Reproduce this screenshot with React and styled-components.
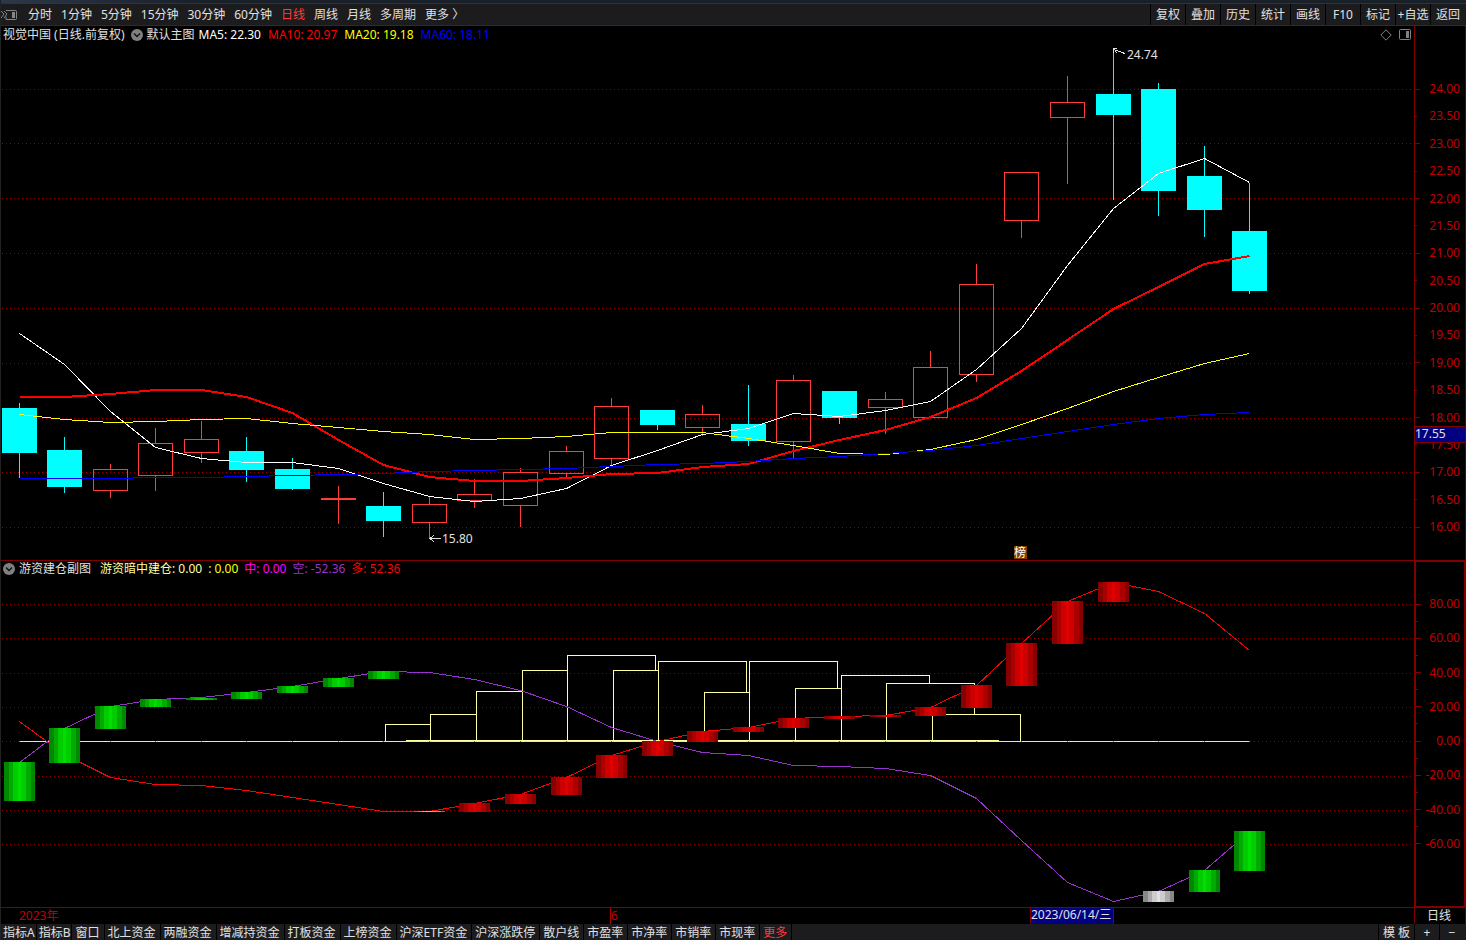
import React from "react";
import styled, { createGlobalStyle } from "styled-components";

const GlobalStyle = createGlobalStyle`
  * { box-sizing: border-box; }
  body {
    margin: 0;
    background: #000;
    color: #e0e0e0;
    font: 12px/16px "Noto Sans", "Noto Sans CJK SC", sans-serif;
  }
  button { font: inherit; color: inherit; margin: 0; padding: 0; border: 0; background: none; white-space: nowrap; cursor: pointer; }
  svg { display: block; }
`;

const Page = styled.main`
  display: flex;
  flex-direction: column;
  min-height: 100vh;
  background: #000;
  border-left: 1px solid #222;
`;
const TopStrip = styled.div`
  height: 4px;
  background: linear-gradient(90deg, #2c3848 0, #18202a 200px, #18202a 100%);
  border-bottom: 1px solid #333;
`;
const Toolbar = styled.nav`
  display: flex;
  justify-content: space-between;
  height: 22px;
  padding-right: 1px;
  background: #1c1c1e;
  border-bottom: 1px solid #2c2c2c;
`;
const Periods = styled.div`
  display: flex;
  align-items: center;
  gap: 9px;
`;
const Period = styled.button`
  color: ${(p) => (p.$active ? "#ff3c3c" : "#e0e0e0")};
`;
const PanelToggle = styled.button`
  width: 18px;
  height: 16px;
`;
const Tools = styled.div`
  display: flex;
`;
const Tool = styled.button`
  width: 35px;
  border-left: 1px solid #000;
  overflow: hidden;
`;
const Panel = styled.section`
  display: flex;
  border-bottom: 1px solid #800000;
`;
const Plot = styled.div`
  flex: 1;
  min-width: 0;
  height: ${(p) => p.$height}px;
  overflow: hidden;
  position: relative;
`;
const Legend = styled.header`
  position: absolute;
  top: 0;
  left: 0;
  right: 0;
  display: flex;
  align-items: center;
  gap: 4px;
  height: ${(p) => p.$height}px;
  padding: 0 3px 0 2px;
  white-space: nowrap;
`;
const LegendItem = styled.span`
  color: ${(p) => p.$color};
`;
const LegendTitle = styled.span`
  margin-right: ${(p) => p.$gap || 0}px;
`;
const LegendValues = styled.div`
  display: flex;
  gap: ${(p) => p.$gap}px;
`;
const LegendTools = styled.div`
  display: flex;
  gap: 7px;
  margin-left: auto;
`;
const Canvas = styled.svg`
  width: 100%;
  height: 100%;
`;
const Axis = styled.div`
  position: relative;
  width: 52px;
  display: flex;
  flex-direction: column;
  justify-content: space-between;
  padding: ${(p) => p.$pad};
  color: #c00000;
  border-left: ${(p) => (p.$boxed ? 2 : 1)}px solid #800000;
  border-right: ${(p) => (p.$boxed ? "2px solid #800000" : "1px solid #222")};
  border-top: ${(p) => (p.$boxed ? 1 : 0)}px solid #800000;
  border-bottom: ${(p) => (p.$boxed ? 1 : 0)}px solid #800000;
`;
const AxisLabel = styled.div`
  display: flex;
  align-items: center;
  justify-content: space-between;
  height: 16px;
  padding-right: ${(p) => p.$right}px;
  &::before {
    content: "";
    width: ${(p) => (p.$minor ? 2 : 5)}px;
    height: 1px;
    background: #800000;
  }
`;
const MinorTick = styled.div`
  width: 2px;
  height: 1px;
  background: #800000;
`;
const PriceMarker = styled.div`
  position: absolute;
  top: 400px;
  left: 0;
  right: 0;
  height: 17px;
  line-height: 14px;
  background: #000080;
  border: solid #800000;
  border-width: 1px 0;
  color: #e0e0e0;
`;
const DateRow = styled.div`
  display: flex;
  height: 16px;
  color: #c00000;
`;
const DateTrack = styled.div`
  flex: 1;
  position: relative;
`;
const DateMark = styled.span`
  position: absolute;
  left: ${(p) => p.$x}px;
  top: 0;
  height: 16px;
  border-left: ${(p) => (p.$tick ? 1 : 0)}px solid #b00000;
`;
const DateCursor = styled(DateMark)`
  padding-right: 2px;
  background: #000080;
  color: #e0e0e0;
  border: solid #800000;
  border-width: 0 1px;
  line-height: 14px;
`;
const DatePeriod = styled.div`
  width: 52px;
  padding-right: 2px;
  text-align: center;
  color: #e0e0e0;
  border-left: 1px solid #800000;
  border-right: 1px solid #222;
`;
const BottomBar = styled.nav`
  display: flex;
  height: 16px;
  padding-right: 2px;
  line-height: 14px;
  background: #1c1c1e;
`;
const BottomTab = styled.button`
  padding: ${(p) => (p.$tight ? "2px 1px 0 2px" : "2px 4px 0 3px")};
  border-right: 1px solid #000;
  color: ${(p) => (p.$active ? "#ff3c3c" : "#e0e0e0")};
`;
const BottomTools = styled.div`
  display: flex;
  margin-left: auto;
`;
const BottomTool = styled.button`
  width: ${(p) => p.$width}px;
  padding-top: 2px;
  border-left: 1px solid #000;
`;

const periods = ["分时", "1分钟", "5分钟", "15分钟", "30分钟", "60分钟", "日线", "周线", "月线", "多周期", "更多 〉"];
const tools = ["复权", "叠加", "历史", "统计", "画线", "F10", "标记", "+自选", "返回"];
const tabs = ["指标A", "指标B", "窗口", "北上资金", "两融资金", "增减持资金", "打板资金", "上榜资金", "沪深ETF资金", "沪深涨跌停", "散户线", "市盈率", "市净率", "市销率", "市现率", "更多"];
const prices = Array.from({ length: 17 }, (_, i) => (24 - i / 2).toFixed(2));
const levels = ["80.00", "60.00", "40.00", "20.00", "0.00", "-20.00", "-40.00", "-60.00"];

const slot = (i) => 18 + Math.floor(i * 45.585);

/* direction, high, body top, body bottom, low */
const candles = [
  ["d", 403, 408, 453, 478], ["d", 437, 450, 487, 493], ["u", 464, 469, 491, 498], ["u", 428, 443, 476, 491],
  ["u", 421, 439, 453, 463], ["d", 437, 451, 470, 482], ["d", 458, 469, 489, 490], ["u", 486, 498, 500, 524],
  ["d", 492, 506, 521, 537], ["u", 496, 504, 523, 538], ["u", 479, 494, 501, 508], ["u", 468, 472, 506, 527],
  ["u", 446, 451, 474, 478], ["u", 398, 406, 459, 466], ["d", 410, 410, 425, 430], ["u", 405, 414, 428, 436],
  ["d", 385, 424, 441, 446], ["u", 375, 380, 442, 458], ["d", 391, 391, 418, 424], ["u", 392, 399, 408, 434],
  ["u", 351, 367, 418, 418], ["u", 264, 284, 375, 382], ["u", 172, 172, 221, 238], ["u", 76, 102, 118, 184],
  ["d", 48, 94, 115, 200], ["d", 83, 89, 191, 216], ["d", 146, 176, 210, 237], ["d", 183, 231, 291, 294],
];
const ma60 = [478, 478, 478, 477, 477, 476, 475, 474, 473, 471, 470, 469, 468, 466, 464, 463, 461, 458, 456, 453, 450, 445, 438, 431, 424, 418, 414, 412];
const ma20 = [414, 419, 422, 421, 419, 418, 423, 427, 431, 434, 439, 438, 436, 432, 432, 432, 438, 445, 453, 454, 449, 439, 424, 408, 391, 377, 363, 353];
const ma10 = [397, 397, 394, 390, 390, 397, 413, 440, 465, 477, 481, 481, 478, 474, 473, 467, 464, 451, 440, 430, 417, 398, 371, 340, 309, 287, 264, 256];
const ma5 = [333, 364, 411, 447, 458, 462, 462, 468, 483, 496, 501, 498, 488, 465, 450, 434, 428, 413, 416, 410, 401, 369, 328, 265, 208, 173, 158, 182];

const bearLine = [762, 728, 706, 699, 697, 692, 686, 678, 671, 672, 679, 690, 706, 727, 741, 752, 755, 765, 766, 768, 775, 798, 840, 882, 901, 891, 870, 831];
const bullLine = [721, 754, 777, 784, 785, 790, 797, 804, 811, 811, 803, 794, 777, 755, 741, 731, 727, 718, 716, 715, 707, 685, 643, 601, 582, 591, 613, 650];

/* slot, top, bottom, palette */
const bars = [
  [0, 762, 801, "g"], [1, 728, 763, "g"], [2, 706, 729, "g"], [3, 699, 707, "g"], [4, 698, 700, "g"], [5, 692, 699, "g"],
  [6, 686, 693, "g"], [7, 678, 687, "g"], [8, 671, 679, "g"], [9, 811, 812, "y"], [10, 803, 812, "r"], [11, 794, 804, "r"],
  [12, 777, 795, "r"], [13, 755, 778, "r"], [14, 741, 756, "r"], [15, 731, 742, "r"], [16, 727, 732, "r"], [17, 718, 728, "r"],
  [18, 716, 719, "r"], [19, 715, 717, "r"], [20, 707, 716, "r"], [21, 685, 708, "r"], [22, 643, 686, "r"], [23, 601, 644, "r"],
  [24, 582, 602, "r"], [25, 891, 902, "w"], [26, 870, 892, "g"], [27, 831, 871, "g"],
];
const shade = {
  g: (v) => `rgb(0,${v},0)`,
  r: (v) => `rgb(${v},0,0)`,
  w: (v) => `rgb(${v},${v},${v})`,
  y: (v) => `rgb(${v},${v},0)`,
};
/* inset from the bar's left edge, width, brightness */
const stripes = [[0, 31, 136], [5, 22, 170], [9, 13, 204], [14, 3, 224]];

/* left, top, right, where the right edge ends */
const steps = [
  [385, 724, 430, 724], [430, 714, 476, 714], [476, 691, 522, 691], [522, 670, 567, 670], [567, 655, 655, 670],
  [613, 670, 658, 670], [658, 661, 746, 692], [704, 692, 749, 692], [749, 661, 837, 688], [795, 688, 841, 688],
  [841, 675, 929, 683], [886, 683, 974, 714], [932, 714, 1020, 741],
];

const trace = (values, shift = 0.5) => values.map((v, i) => `${slot(i) + 0.5},${v + shift}`).join(" ");

const Grid = ({ rows }) => (
  <g stroke="#900000" strokeDasharray="1 3">
    {rows.map((y) => <line key={y} x1="1" x2="100%" y1={y + 0.5} y2={y + 0.5} />)}
  </g>
);

const Candle = ({ x, data: [dir, high, top, bottom, low] }) => {
  if (dir === "d")
    return (
      <g fill="#00ffff">
        <rect x={x} y={high} width="1" height={low - high} />
        <rect x={x - 17} y={top} width="35" height={bottom - top} />
      </g>
    );
  return (
    <g fill="#ff3c3c">
      <rect x={x} y={high} width="1" height={top - high} />
      <rect x={x} y={bottom} width="1" height={low - bottom} />
      {bottom - top > 2 ? (
        <rect x={x - 16.5} y={top + 0.5} width="34" height={bottom - top - 1} fill="none" stroke="#ff3c3c" />
      ) : (
        <rect x={x - 17} y={top} width="35" height={bottom - top} />
      )}
    </g>
  );
};

const Chevron = () => (
  <svg width="12" height="12" viewBox="0 0 12 12" aria-hidden="true">
    <circle cx="6" cy="6" r="6" fill="#808080" />
    <path d="M3 4.5 6 7.5 9 4.5" fill="none" stroke="#111" strokeWidth="1.4" />
  </svg>
);
const Diamond = () => (
  <svg width="12" height="12" viewBox="0 0 12 12" aria-hidden="true">
    <path d="M6 .8 11.2 6 6 11.2.8 6Z" fill="none" stroke="#808080" />
  </svg>
);
const SidePanel = () => (
  <svg width="12" height="12" viewBox="0 0 12 12" aria-hidden="true">
    <rect x=".5" y=".5" width="11" height="10" rx="1" fill="none" stroke="#808080" />
    <rect x="7" y="2" width="3" height="7" fill="#808080" />
  </svg>
);

export default function App() {
  return (
    <Page>
      <GlobalStyle />
      <TopStrip />
      <Toolbar aria-label="周期">
        <Periods>
          <PanelToggle aria-label="侧栏">
            <svg width="17" height="16" viewBox="0 0 17 16" fill="none" stroke="#858585">
              <path d="M0 4l3 3-3 4M3 4l3 3-3 4" />
              <path d="M5 3.500h9.500q1 0 1 1v7q0 1-1 1h-9.500v-3" />
              <rect x="11" y="5" width="3" height="6" fill="#858585" stroke="none" />
            </svg>
          </PanelToggle>
          {periods.map((p) => <Period key={p} $active={p === "日线"}>{p}</Period>)}
        </Periods>
        <Tools>{tools.map((t) => <Tool key={t}>{t}</Tool>)}</Tools>
      </Toolbar>

      <Panel>
        <Plot $height={534}>
          <Canvas shapeRendering="crispEdges">
            <g transform="translate(0,-26)">
              <Grid rows={[89, 143, 198, 253, 308, 363, 418, 472, 527]} />
              {candles.map((c, i) => <Candle key={i} x={slot(i)} data={c} />)}
              <g fill="none">
                <polyline points={trace(ma5)} stroke="#fff" />
                <polyline points={trace(ma10, 0)} stroke="#f00" strokeWidth="2" />
                <polyline points={trace(ma20)} stroke="#ff0" />
                <polyline points={trace(ma60)} stroke="#00f" />
                <path d="M1112.500 49.500 1124 53.500M1112.500 53V48.500H1116M1114 51l2 2" stroke="#e0e0e0" />
                <path d="M428.500 538.500H440M433 535 429 538.500 433 542" stroke="#e0e0e0" />
              </g>
              <g fill="#e0e0e0">
                <text x="1126" y="59">24.74</text>
                <text x="441" y="543">15.80</text>
                <rect x="1013" y="546" width="13" height="13" fill="#803c00" />
                <text x="1013" y="557" fill="#fff">榜</text>
              </g>
            </g>
          </Canvas>
          <Legend $height={18}>
            <LegendTitle $gap={2}>视觉中国 (日线.前复权)</LegendTitle>
            <Chevron />
            <LegendTitle>默认主图</LegendTitle>
            <LegendValues $gap={7}>
              <LegendItem $color="#fff">MA5: 22.30</LegendItem>
              <LegendItem $color="#f00">MA10: 20.97</LegendItem>
              <LegendItem $color="#ff0">MA20: 19.18</LegendItem>
              <LegendItem $color="#00f">MA60: 18.11</LegendItem>
            </LegendValues>
            <LegendTools><Diamond /><SidePanel /></LegendTools>
          </Legend>
        </Plot>
        <Axis $pad="55px 0 25px">
          {prices.map((p, i) => <AxisLabel key={p} $right={5} $minor={i % 2 === 1}>{p}</AxisLabel>)}
          <PriceMarker>17.55</PriceMarker>
        </Axis>
      </Panel>

      <Panel>
        <Plot $height={346}>
          <Canvas shapeRendering="crispEdges">
            <g transform="translate(0,-561)">
              <Grid rows={[604, 638, 673, 707, 741, 776, 810, 844]} />
              <line x1="18" x2="1249" y1="741.500" y2="741.500" stroke="#ff0" />
              {bullLine.map((_, i) => <rect key={i} x={slot(i)} y="741" width="1" height="1" fill="#f0f" />)}
              <g fill="none" stroke="#ffffa0">
                {steps.map(([l, t, r, b]) => (
                  <path key={l} d={`M${l - 0.5} 741V${t + 0.5}H${r - 0.5}V${b + 0.5}`} />
                ))}
                <path d="M405 740.500H998" />
              </g>
              <polyline points={trace(bearLine)} fill="none" stroke="#9932cc" />
              <polyline points={trace(bullLine)} fill="none" stroke="#f00" />
              {bars.map(([i, top, bottom, tone]) =>
                stripes.map(([inset, width, v]) => (
                  <rect key={`${i}-${inset}`} x={slot(i) - 15 + inset} y={top} width={width} height={bottom - top} fill={shade[tone](v)} />
                ))
              )}
            </g>
          </Canvas>
          <Legend $height={16}>
            <Chevron />
            <LegendTitle $gap={5}>游资建仓副图</LegendTitle>
            <LegendValues $gap={6}>
              <LegendItem $color="#ffffa0">游资暗中建仓: 0.00</LegendItem>
              <LegendItem $color="#ff0">: 0.00</LegendItem>
              <LegendItem $color="#f0f">中: 0.00</LegendItem>
              <LegendItem $color="#9932cc">空: -52.36</LegendItem>
              <LegendItem $color="#f00">多: 52.36</LegendItem>
            </LegendValues>
          </Legend>
        </Plot>
        <Axis $boxed $pad="34px 0 54px">
          {levels.map((l, i) => (
            <React.Fragment key={l}>
              {i > 0 && <MinorTick />}
              <AxisLabel $right={4}>{l}</AxisLabel>
            </React.Fragment>
          ))}
        </Axis>
      </Panel>

      <DateRow>
        <DateTrack>
          <DateMark $x={18}>2023年</DateMark>
          <DateMark $x={609} $tick>6</DateMark>
          <DateCursor $x={1029}>2023/06/14/三</DateCursor>
        </DateTrack>
        <DatePeriod>日线</DatePeriod>
      </DateRow>

      <BottomBar aria-label="指标">
        {tabs.map((t) => (
          <BottomTab key={t} $active={t === "更多"} $tight={t.length === 3 && t.startsWith("指标")}>{t}</BottomTab>
        ))}
        <BottomTools>
          <BottomTool $width={36}>模 板</BottomTool>
          <BottomTool $width={25}>+</BottomTool>
          <BottomTool $width={25}>−</BottomTool>
        </BottomTools>
      </BottomBar>
    </Page>
  );
}
